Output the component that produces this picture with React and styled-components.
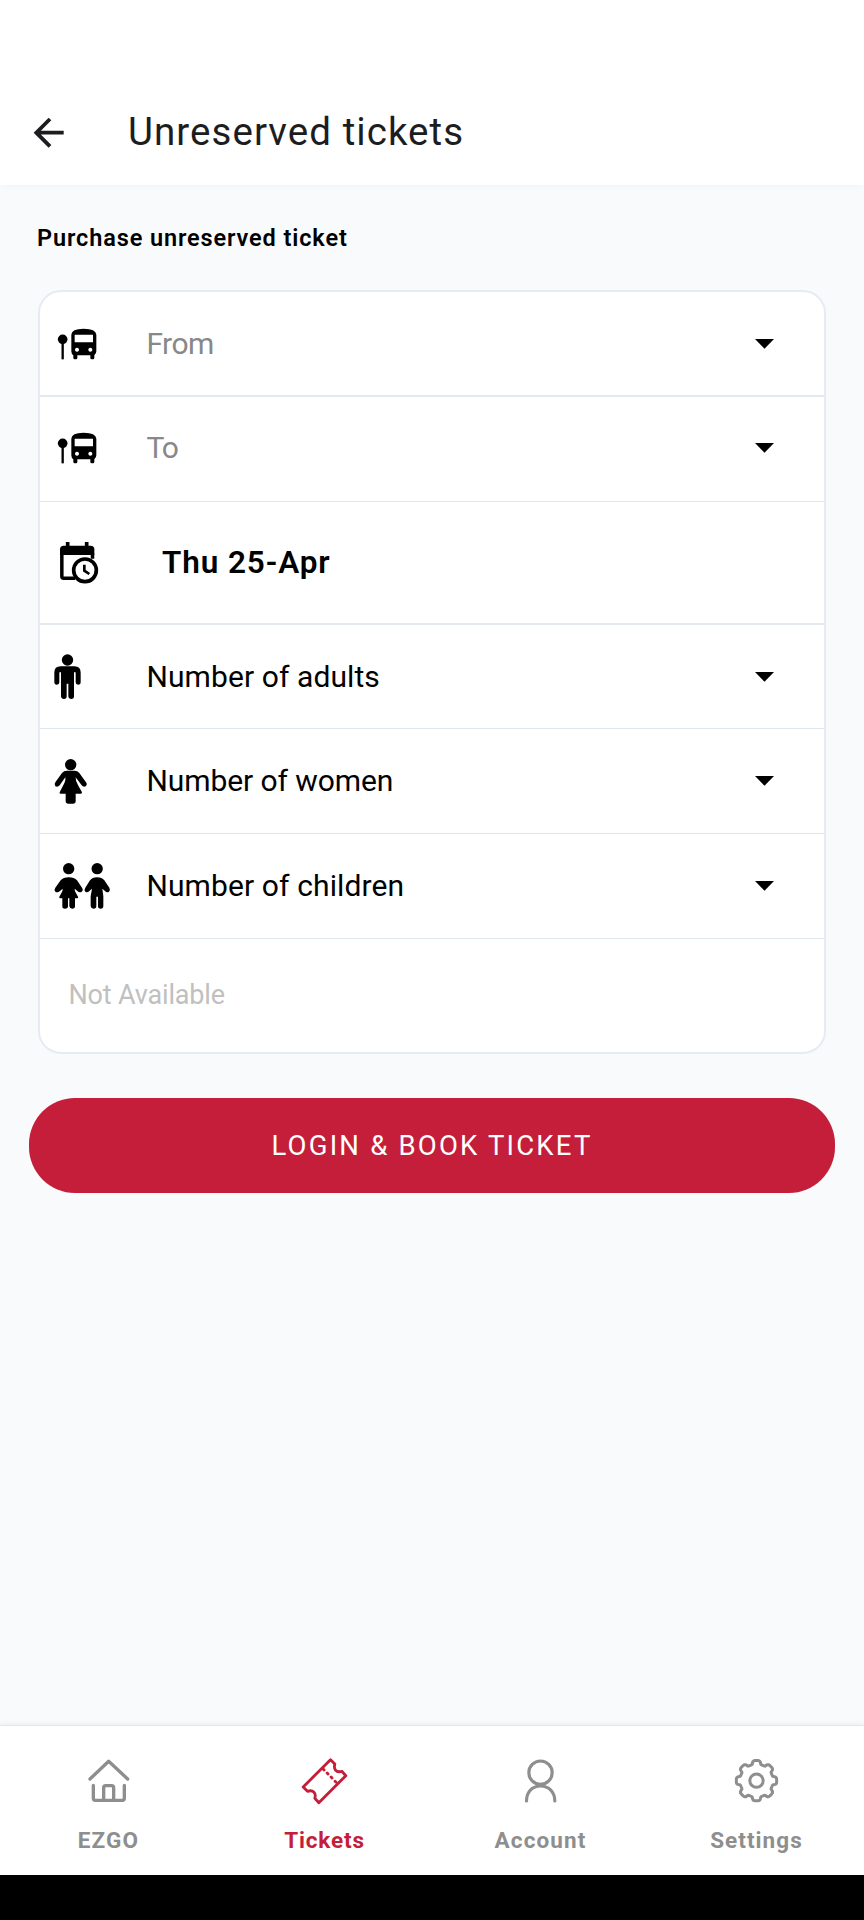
import React from "react";
import styled, { createGlobalStyle } from "styled-components";

const Global = createGlobalStyle`
  * { box-sizing: border-box; }
  body { margin: 0; background: #f9fafc; }
`;

const Screen = styled.div`
  width: 864px;
  height: 1920px;
  display: flex;
  flex-direction: column;
  background: #f9fafc;
  font-family: Roboto, "Liberation Sans", sans-serif;
  color: #000;
  overflow: hidden;
`;

const Text = styled.span`
  display: block;
  margin: 0;
  white-space: nowrap;
  font-size: ${(p) => p.$size}px;
  line-height: 40px;
  font-weight: ${(p) => p.$weight || 400};
  letter-spacing: ${(p) => p.$track || 0}px;
  color: ${(p) => p.$color || "inherit"};
`;

const Header = styled.header`
  height: 185px;
  padding: 112px 0 0 30px;
  display: flex;
  align-items: flex-start;
  gap: 58px;
  background: #fff;
  box-shadow: 0 1px 8px rgba(0, 0, 0, 0.03);
  svg { display: block; width: 40px; height: 40px; }
`;

const Main = styled.main`
  flex: 1;
  display: flex;
  flex-direction: column;
`;

const Heading = styled.div`
  height: 105px;
  padding: 33px 0 0 37px;
`;

const Card = styled.section`
  margin: 0 38px;
  width: 788px;
  height: 764px;
  border: 2px solid #e6ebf3;
  border-radius: 23px;
  background: #fff;
  display: flex;
  flex-direction: column;
`;

const Row = styled.div`
  height: ${(p) => p.$height}px;
  border-bottom: ${(p) => p.$line}px solid ${(p) => (p.$line > 1 ? "#e4e9f0" : "#dfe6ee")};
  display: flex;
  align-items: center;
  padding-right: 50px;
  padding-left: ${(p) => p.$indent || 0}px;
  padding-bottom: ${(p) => p.$lift || 0}px;
`;

const RowIcon = styled.svg`
  display: block;
  width: 80px;
  height: 50px;
  margin-right: ${(p) => p.$gap || 26.4}px;
  flex: none;
`;

const Caret = styled.svg`
  display: block;
  width: 19px;
  height: 10px;
  margin-left: auto;
`;

const Button = styled.button`
  margin: 44px 0 0 29px;
  width: 806px;
  height: 95px;
  border: 0;
  border-radius: 46px;
  background: #c41e3a;
  color: #fff;
  font-family: inherit;
  display: flex;
  align-items: center;
  justify-content: center;
`;

const Nav = styled.nav`
  height: 150px;
  border-top: 1px solid #e4e6e8;
  background: #fff;
  box-shadow: 0 -1px 5px rgba(0, 0, 0, 0.06);
  display: flex;
`;

const Tab = styled.a`
  width: 216px;
  padding: 29px 0 0 1px;
  display: flex;
  flex-direction: column;
  align-items: center;
  gap: 15px;
  color: ${(p) => (p.$active ? "#c41e3a" : "#8e8e8e")};
  svg {
    display: block;
    width: 50px;
    height: 50px;
    fill: none;
    stroke: currentColor;
    stroke-linecap: round;
    stroke-linejoin: round;
  }
`;

const SystemBar = styled.div`
  height: 45px;
  background: #000;
`;

const Bus = () => (
  <RowIcon viewBox="30 116 240 150">
    <circle cx="98" cy="177" r="14.5" />
    <path d="M98 185V237" stroke="#000" strokeWidth="7" />
    <path fillRule="evenodd" d="M124 163Q124 145 161 145T199 163V213Q199 220 193 225V233Q193 237 189 237H185Q181 237 181 233V225H142V233Q142 237 138 237H134Q130 237 130 233V225Q124 221 124 213ZM134 163V186H189V163ZM141 202a6 6 0 1 0 .01 0M181 202a6 6 0 1 0 .01 0" />
  </RowIcon>
);

const Calendar = () => (
  <RowIcon viewBox="30 54 240 150" $gap={42}>
    <path d="M113 66V82M170 66V82" stroke="#000" strokeWidth="11" />
    <path d="M95.5 100V169Q95.5 175 101 175H135M187.500 100V116" fill="none" stroke="#000" strokeWidth="10.500" />
    <path d="M90 105V88Q90 77 101 77H182Q193 77 193 88V105Z" />
    <circle cx="165" cy="151" r="34" fill="#fff" stroke="#000" strokeWidth="11" />
    <path d="M163 134V152L178 162" fill="none" stroke="#000" strokeWidth="8" />
  </RowIcon>
);

const Adult = () => (
  <RowIcon viewBox="30 396 240 150">
    <circle cx="112.500" cy="420" r="17" />
    <path d="M92 439H133Q152 439 152 458V486Q152 494 144.500 494T137 487V457H132V529Q132 537 124 537T115 529V491H110V529Q110 537 102 537T93 529V457H88V487Q88 494 80.500 494T73 486V458Q73 439 92 439Z" />
  </RowIcon>
);

const Woman = () => (
  <RowIcon viewBox="30 109 240 150">
    <circle cx="122" cy="135" r="17" />
    <path d="M110 153H134Q142 153 148 160L168 188Q173 195 167 200Q160 204 155 197L137 173Q136 185 145 198L156 218Q157 222 152 222H137V244Q137 252 129 252H115Q107 252 107 244V222H92Q87 222 89 218L99 198Q108 184 106 173L89 197Q83 204 76 200Q71 195 76 188L96 160Q102 153 110 153Z" />
  </RowIcon>
);

const Children = () => (
  <RowIcon viewBox="30 424 240 150">
    <circle cx="116" cy="447" r="17" />
    <circle cx="201.500" cy="447" r="17" />
    <path d="M116 473Q133 473 141 482L156 504Q161 511 155 516Q149 521 142 514L134 507Q133 513 139 522L144 531Q146 536 141 536H135V560Q135 567 127 567T118 560V536H114V560Q114 567 105 567T97 560V536H92Q86 536 88 531L93 522Q99 513 98 507L90 514Q83 521 76 516Q71 511 76 504L92 482Q100 473 116 473Z" />
    <path d="M201 473Q216 473 223 482L238 504Q242 511 237 516Q230 520 225 514L217 507L220 530V560Q220 567 212 567T204 560V531H199V560Q199 567 191 567T182 560V530L186 507L178 514Q172 520 166 516Q161 511 166 504L180 482Q187 473 201 473Z" />
  </RowIcon>
);

const Down = () => (
  <Caret viewBox="0 0 19 10"><path d="M0 0H19L9.500 9.700Z" /></Caret>
);

function gearPath() {
  const points = [];
  for (let i = 0; i < 96; i++) {
    const a = (i / 96) * Math.PI * 2;
    const c = Math.cos(a * 8);
    const r = 55 + 5.5 * Math.tanh((c + 0.15) * 3.5);
    points.push(`${(75 + r * Math.cos(a)).toFixed(1)} ${(75 + r * Math.sin(a)).toFixed(1)}`);
  }
  return `M${points.join("L")}Z`;
}

export default function App() {
  return (
    <>
      <Global />
      <Screen>
        <Header>
          <svg viewBox="0 0 40 40" fill="none" stroke="#1d1d1f" strokeWidth="3.800">
            <path d="M33.700 20.700H6M20 7L6.300 20.700L20 34.400" />
          </svg>
          <Text as="h1" $size={38.5} $track={1.05} $color="#1d1d1f">Unreserved tickets</Text>
        </Header>
        <Main>
          <Heading><Text $size={23.5} $weight={600} $track={0.88}>Purchase unreserved ticket</Text></Heading>
          <Card>
            <Row $height={105} $line={2}><Bus /><Text $size={30} $track={-0.5} $color="#888">From</Text><Down /></Row>
            <Row $height={105} $line={1} $lift={2}><Bus /><Text $size={30} $track={-1.2} $color="#888">To</Text><Down /></Row>
            <Row $height={123} $line={2}><Calendar /><Text $size={31.5} $weight={600} $track={0.9}>Thu 25-Apr</Text></Row>
            <Row $height={104} $line={1}><Adult /><Text $size={30} $track={0.1}>Number of adults</Text><Down /></Row>
            <Row $height={105} $line={1}><Woman /><Text $size={30} $track={-0.07}>Number of women</Text><Down /></Row>
            <Row $height={105} $line={1}><Children /><Text $size={30} $track={0.12}>Number of children</Text><Down /></Row>
            <Row $height={113} $line={0} $lift={2} $indent={28.5}><Text $size={27} $track={-0.17} $color="#c0c0c0">Not Available</Text></Row>
          </Card>
          <Button><Text $size={27.5} $weight={450} $track={2.2}>LOGIN &amp; BOOK TICKET</Text></Button>
        </Main>
        <Nav>
          <Tab>
            <svg viewBox="131 135 150 150" strokeWidth="10">
              <path d="M149 207L205 154L262 207M159 226V265Q159 271 165 271H246Q252 271 252 265V226M190 270V233Q190 227 196 227H214Q220 227 220 233V270" />
            </svg>
            <Text $size={22.5} $weight={700} $track={1.1}>EZGO</Text>
          </Tab>
          <Tab $active>
            <svg viewBox="779.5 135 150 150" strokeWidth="8.5">
              <path d="M789 231L871 149L884 162C880 176 886 189 905 184L917 197L836 278L824 265C829 248 818 238 802 244Z" />
              <path d="M849 177L891 220" strokeDasharray="4 13" />
            </svg>
            <Text $size={22.5} $weight={700} $track={0.85}>Tickets</Text>
          </Tab>
          <Tab>
            <svg viewBox="167.5 135 150 150" strokeWidth="9.500">
              <circle cx="241" cy="188" r="35" />
              <path d="M199 273C199 246 216 228 241 228S284 246 284 273" />
            </svg>
            <Text $size={22.5} $weight={700} $track={1.1}>Account</Text>
          </Tab>
          <Tab>
            <svg viewBox="1.5 -2 150 150" strokeWidth="9">
              <path d={gearPath()} />
              <circle cx="75" cy="75" r="20" />
            </svg>
            <Text $size={22.5} $weight={700} $track={1.05}>Settings</Text>
          </Tab>
        </Nav>
        <SystemBar />
      </Screen>
    </>
  );
}
